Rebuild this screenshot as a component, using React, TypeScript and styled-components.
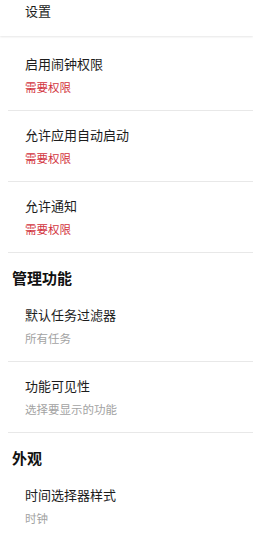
import styled, { createGlobalStyle } from 'styled-components';

const GlobalStyle = createGlobalStyle`
  body {
    margin: 0;
    background: #ffffff;
    font-family: "Noto Sans CJK SC", "Noto Sans", sans-serif;
    -webkit-font-smoothing: antialiased;
  }
`;

interface settingItem {
  title: string,
  summary: string,
  warn?: boolean
}

interface settingSection {
  header?: string,
  items: settingItem[]
}

const sections: settingSection[] = [
  {
    items: [
      { title: '启用闹钟权限', summary: '需要权限', warn: true },
      { title: '允许应用自动启动', summary: '需要权限', warn: true },
      { title: '允许通知', summary: '需要权限', warn: true },
    ]
  },
  {
    header: '管理功能',
    items: [
      { title: '默认任务过滤器', summary: '所有任务' },
      { title: '功能可见性', summary: '选择要显示的功能' },
    ]
  },
  {
    header: '外观',
    items: [
      { title: '时间选择器样式', summary: '时钟' },
    ]
  },
];

const Page = styled.div`
  width: 253px;
  min-height: 539px;
  background: #ffffff;
  overflow: hidden;
`;

const TopBar = styled.div`
  height: 36px;
  box-sizing: border-box;
  padding: 2px 0 0 25px;
  font-size: 13px;
  line-height: 18px;
  color: #1c1c1c;
  box-shadow: 0 1px 2px rgba(0, 0, 0, 0.1);
  position: relative;
  z-index: 1;
`;

const List = styled.div`
  padding-top: 4px;
`;

const Section = styled.section`
  display: flex;
  flex-direction: column;
`;

const SectionHeader = styled.div`
  padding: 15px 0 3px 12px;
  font-size: 15px;
  line-height: 20px;
  font-weight: 700;
  color: #111111;
`;

const Item = styled.div`
  display: flex;
  flex-direction: column;
  gap: 6px;
  margin-left: 8px;
  padding: 15px 0 15px 17px;
  border-bottom: 1px solid #e8e8e8;
`;

const Title = styled.div`
  font-size: 13px;
  line-height: 18px;
  color: #1c1c1c;
`;

const Summary = styled.div<{ $warn?: boolean }>`
  font-size: 11.5px;
  line-height: 16px;
  color: ${p => p.$warn ? '#d2333d' : '#a3a3a3'};
`;

export default function App() {
  return (
    <Page>
      <GlobalStyle />
      <TopBar>设置</TopBar>

      <List>
        {sections.map((section, i) => (
          <Section key={i}>
            {section.header && <SectionHeader>{section.header}</SectionHeader>}
            {section.items.map(item => (
              <Item key={item.title}>
                <Title>{item.title}</Title>
                <Summary $warn={item.warn}>{item.summary}</Summary>
              </Item>
            ))}
          </Section>
        ))}
      </List>
    </Page>
  );
}
